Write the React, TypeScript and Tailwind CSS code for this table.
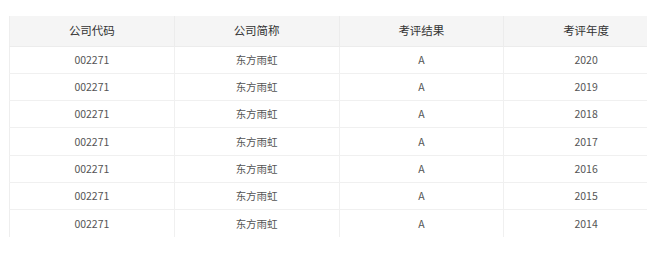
import React from "react";

const rows = ["2020", "2019", "2018", "2017", "2016", "2015", "2014"];

export default function App() {
  return (
    <div
      className="w-[647px] h-[258px] overflow-hidden bg-white pt-[16px] pl-[9px]"
      style={{ fontFamily: '"Noto Sans CJK SC", "Noto Sans", sans-serif' }}
    >
      <table className="w-[660px] table-fixed border-collapse border-l border-[#eeeeee]">
        <thead>
          <tr className="h-[30px] bg-[#f5f5f5] text-[11.5px] text-[#333]">
            {["公司代码", "公司简称", "考评结果", "考评年度"].map((h) => (
              <th key={h} className="font-normal border-r border-b border-[#ececec] text-center">
                {h}
              </th>
            ))}
          </tr>
        </thead>
        <tbody>
          {rows.map((y, i) => (
            <tr
              key={y}
              className={
                "h-[27.3px] text-[10.5px] text-[#555] " +
                (i < rows.length - 1 ? "border-b border-[#f0f0f0]" : "")
              }
            >
              <td className="border-r border-[#f0f0f0] text-center">002271</td>
              <td className="border-r border-[#f0f0f0] text-center">东方雨虹</td>
              <td className="border-r border-[#f0f0f0] text-center">A</td>
              <td className="border-r border-[#f0f0f0] text-center">{y}</td>
            </tr>
          ))}
        </tbody>
      </table>
    </div>
  );
}
